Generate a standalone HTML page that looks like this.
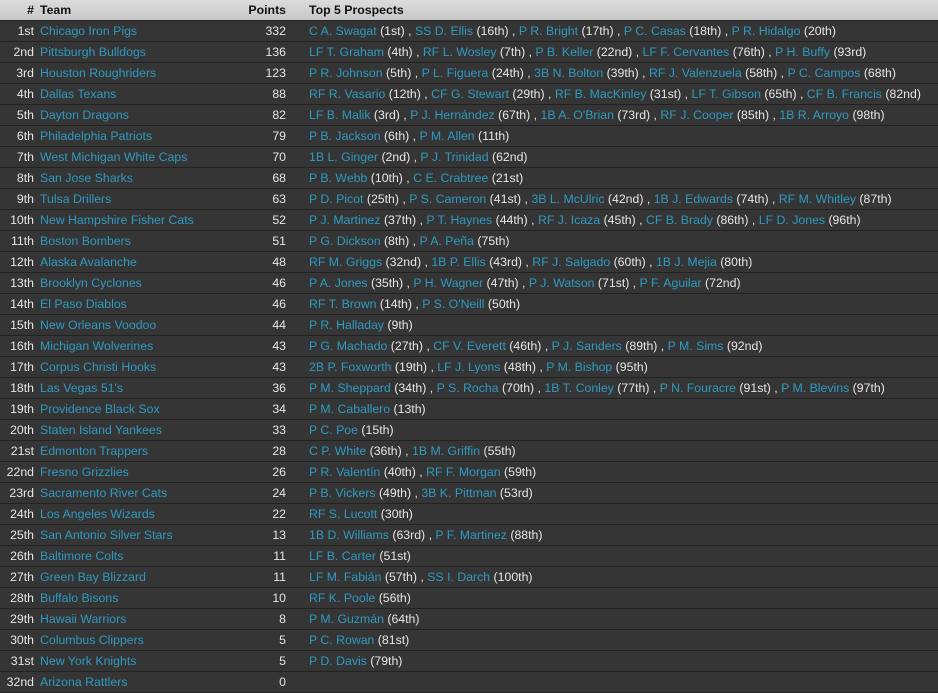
<!DOCTYPE html>
<html><head><meta charset="utf-8"><style>
body{margin:0;background:#333;width:938px;height:692px;overflow:hidden;font-family:"Liberation Sans",sans-serif;font-size:12.3px;color:#e6e6e6}
table{border-collapse:collapse;width:938px;table-layout:fixed}
th{background:linear-gradient(#dcdcdc,#c8c8c8);color:#111;font-weight:bold;height:20px;padding:0;text-align:left;border-bottom:1px solid #222}
td{height:20px;padding:0;border-bottom:1px solid #222;background:#353535;white-space:nowrap;overflow:hidden}
.r{text-align:right}
a,.a{color:#2f9ac0;text-decoration:none}
tr td:nth-child(1),tr th:nth-child(1){text-align:right;padding-right:0}
</style></head><body>
<table>
<colgroup><col style="width:34px"><col style="width:6px"><col style="width:200px"><col style="width:46px"><col style="width:23px"><col></colgroup>
<tr><th>#</th><th></th><th>Team</th><th class="r">Points</th><th></th><th>Top 5 Prospects</th></tr>
<tr><td>1st</td><td></td><td class="a">Chicago Iron Pigs</td><td class="r">332</td><td></td><td><a>C A. Swagat</a> (1st) , <a>SS D. Ellis</a> (16th) , <a>P R. Bright</a> (17th) , <a>P C. Casas</a> (18th) , <a>P R. Hidalgo</a> (20th)</td></tr>
<tr><td>2nd</td><td></td><td class="a">Pittsburgh Bulldogs</td><td class="r">136</td><td></td><td><a>LF T. Graham</a> (4th) , <a>RF L. Wosley</a> (7th) , <a>P B. Keller</a> (22nd) , <a>LF F. Cervantes</a> (76th) , <a>P H. Buffy</a> (93rd)</td></tr>
<tr><td>3rd</td><td></td><td class="a">Houston Roughriders</td><td class="r">123</td><td></td><td><a>P R. Johnson</a> (5th) , <a>P L. Figuera</a> (24th) , <a>3B N. Bolton</a> (39th) , <a>RF J. Valenzuela</a> (58th) , <a>P C. Campos</a> (68th)</td></tr>
<tr><td>4th</td><td></td><td class="a">Dallas Texans</td><td class="r">88</td><td></td><td><a>RF R. Vasario</a> (12th) , <a>CF G. Stewart</a> (29th) , <a>RF B. MacKinley</a> (31st) , <a>LF T. Gibson</a> (65th) , <a>CF B. Francis</a> (82nd)</td></tr>
<tr><td>5th</td><td></td><td class="a">Dayton Dragons</td><td class="r">82</td><td></td><td><a>LF B. Malik</a> (3rd) , <a>P J. Hernández</a> (67th) , <a>1B A. O'Brian</a> (73rd) , <a>RF J. Cooper</a> (85th) , <a>1B R. Arroyo</a> (98th)</td></tr>
<tr><td>6th</td><td></td><td class="a">Philadelphia Patriots</td><td class="r">79</td><td></td><td><a>P B. Jackson</a> (6th) , <a>P M. Allen</a> (11th)</td></tr>
<tr><td>7th</td><td></td><td class="a">West Michigan White Caps</td><td class="r">70</td><td></td><td><a>1B L. Ginger</a> (2nd) , <a>P J. Trinidad</a> (62nd)</td></tr>
<tr><td>8th</td><td></td><td class="a">San Jose Sharks</td><td class="r">68</td><td></td><td><a>P B. Webb</a> (10th) , <a>C E. Crabtree</a> (21st)</td></tr>
<tr><td>9th</td><td></td><td class="a">Tulsa Drillers</td><td class="r">63</td><td></td><td><a>P D. Picot</a> (25th) , <a>P S. Cameron</a> (41st) , <a>3B L. McUlric</a> (42nd) , <a>1B J. Edwards</a> (74th) , <a>RF M. Whitley</a> (87th)</td></tr>
<tr><td>10th</td><td></td><td class="a">New Hampshire Fisher Cats</td><td class="r">52</td><td></td><td><a>P J. Martinez</a> (37th) , <a>P T. Haynes</a> (44th) , <a>RF J. Icaza</a> (45th) , <a>CF B. Brady</a> (86th) , <a>LF D. Jones</a> (96th)</td></tr>
<tr><td>11th</td><td></td><td class="a">Boston Bombers</td><td class="r">51</td><td></td><td><a>P G. Dickson</a> (8th) , <a>P A. Peña</a> (75th)</td></tr>
<tr><td>12th</td><td></td><td class="a">Alaska Avalanche</td><td class="r">48</td><td></td><td><a>RF M. Griggs</a> (32nd) , <a>1B P. Ellis</a> (43rd) , <a>RF J. Salgado</a> (60th) , <a>1B J. Mejia</a> (80th)</td></tr>
<tr><td>13th</td><td></td><td class="a">Brooklyn Cyclones</td><td class="r">46</td><td></td><td><a>P A. Jones</a> (35th) , <a>P H. Wagner</a> (47th) , <a>P J. Watson</a> (71st) , <a>P F. Aguilar</a> (72nd)</td></tr>
<tr><td>14th</td><td></td><td class="a">El Paso Diablos</td><td class="r">46</td><td></td><td><a>RF T. Brown</a> (14th) , <a>P S. O'Neill</a> (50th)</td></tr>
<tr><td>15th</td><td></td><td class="a">New Orleans Voodoo</td><td class="r">44</td><td></td><td><a>P R. Halladay</a> (9th)</td></tr>
<tr><td>16th</td><td></td><td class="a">Michigan Wolverines</td><td class="r">43</td><td></td><td><a>P G. Machado</a> (27th) , <a>CF V. Everett</a> (46th) , <a>P J. Sanders</a> (89th) , <a>P M. Sims</a> (92nd)</td></tr>
<tr><td>17th</td><td></td><td class="a">Corpus Christi Hooks</td><td class="r">43</td><td></td><td><a>2B P. Foxworth</a> (19th) , <a>LF J. Lyons</a> (48th) , <a>P M. Bishop</a> (95th)</td></tr>
<tr><td>18th</td><td></td><td class="a">Las Vegas 51's</td><td class="r">36</td><td></td><td><a>P M. Sheppard</a> (34th) , <a>P S. Rocha</a> (70th) , <a>1B T. Conley</a> (77th) , <a>P N. Fouracre</a> (91st) , <a>P M. Blevins</a> (97th)</td></tr>
<tr><td>19th</td><td></td><td class="a">Providence Black Sox</td><td class="r">34</td><td></td><td><a>P M. Caballero</a> (13th)</td></tr>
<tr><td>20th</td><td></td><td class="a">Staten Island Yankees</td><td class="r">33</td><td></td><td><a>P C. Poe</a> (15th)</td></tr>
<tr><td>21st</td><td></td><td class="a">Edmonton Trappers</td><td class="r">28</td><td></td><td><a>C P. White</a> (36th) , <a>1B M. Griffin</a> (55th)</td></tr>
<tr><td>22nd</td><td></td><td class="a">Fresno Grizzlies</td><td class="r">26</td><td></td><td><a>P R. Valentín</a> (40th) , <a>RF F. Morgan</a> (59th)</td></tr>
<tr><td>23rd</td><td></td><td class="a">Sacramento River Cats</td><td class="r">24</td><td></td><td><a>P B. Vickers</a> (49th) , <a>3B K. Pittman</a> (53rd)</td></tr>
<tr><td>24th</td><td></td><td class="a">Los Angeles Wizards</td><td class="r">22</td><td></td><td><a>RF S. Lucott</a> (30th)</td></tr>
<tr><td>25th</td><td></td><td class="a">San Antonio Silver Stars</td><td class="r">13</td><td></td><td><a>1B D. Williams</a> (63rd) , <a>P F. Martinez</a> (88th)</td></tr>
<tr><td>26th</td><td></td><td class="a">Baltimore Colts</td><td class="r">11</td><td></td><td><a>LF B. Carter</a> (51st)</td></tr>
<tr><td>27th</td><td></td><td class="a">Green Bay Blizzard</td><td class="r">11</td><td></td><td><a>LF M. Fabián</a> (57th) , <a>SS I. Darch</a> (100th)</td></tr>
<tr><td>28th</td><td></td><td class="a">Buffalo Bisons</td><td class="r">10</td><td></td><td><a>RF K. Poole</a> (56th)</td></tr>
<tr><td>29th</td><td></td><td class="a">Hawaii Warriors</td><td class="r">8</td><td></td><td><a>P M. Guzmán</a> (64th)</td></tr>
<tr><td>30th</td><td></td><td class="a">Columbus Clippers</td><td class="r">5</td><td></td><td><a>P C. Rowan</a> (81st)</td></tr>
<tr><td>31st</td><td></td><td class="a">New York Knights</td><td class="r">5</td><td></td><td><a>P D. Davis</a> (79th)</td></tr>
<tr><td>32nd</td><td></td><td class="a">Arizona Rattlers</td><td class="r">0</td><td></td><td></td></tr>
</table>
</body></html>
